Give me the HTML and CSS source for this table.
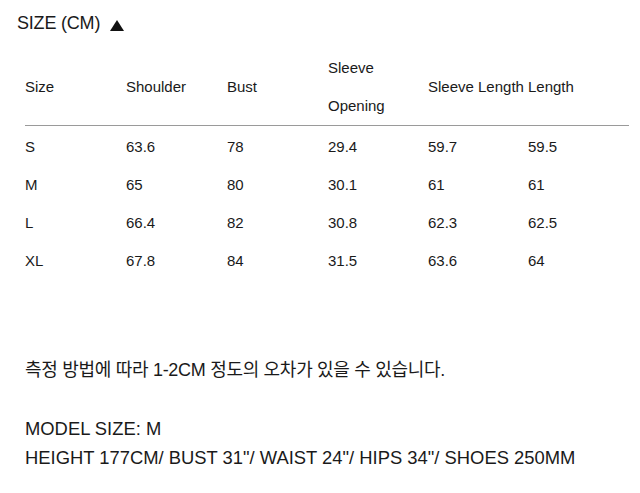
FILE: index.html
```html
<!DOCTYPE html>
<html lang="ko">
<head>
<meta charset="utf-8">
<link rel="stylesheet" href="styles.css">
</head>
<body>
<h2 class="title">SIZE (CM)<span class="arrow" aria-label="▲"></span></h2>
<table class="size-table">
  <colgroup>
    <col class="c1"><col class="c2"><col class="c3"><col class="c4"><col class="c5"><col class="c6">
  </colgroup>
  <thead>
    <tr><th>Size</th><th>Shoulder</th><th>Bust</th><th>Sleeve<br>Opening</th><th>Sleeve Length</th><th>Length</th></tr>
  </thead>
  <tbody>
    <tr class="first"><td>S</td><td>63.6</td><td>78</td><td>29.4</td><td>59.7</td><td>59.5</td></tr>
    <tr><td>M</td><td>65</td><td>80</td><td>30.1</td><td>61</td><td>61</td></tr>
    <tr><td>L</td><td>66.4</td><td>82</td><td>30.8</td><td>62.3</td><td>62.5</td></tr>
    <tr><td>XL</td><td>67.8</td><td>84</td><td>31.5</td><td>63.6</td><td>64</td></tr>
  </tbody>
</table>
<div class="notes">
  <p class="note">측정 방법에 따라 1-2CM 정도의 오차가 있을 수 있습니다.</p>
  <p class="model">MODEL SIZE: M<br>HEIGHT 177CM/ BUST 31"/ WAIST 24"/ HIPS 34"/ SHOES 250MM</p>
</div>
</body>
</html>
```
FILE: styles.css
```css
html, body {
  margin: 0;
  padding: 0;
  background: #ffffff;
}
body {
  width: 640px;
  height: 493px;
  overflow: hidden;
  color: #1a1a1a;
  font-family: "Liberation Sans", Arial, "Noto Sans CJK KR", sans-serif;
}
.title {
  margin: 0;
  padding: 13px 0 0 17px;
  font-size: 18px;
  line-height: 20px;
  font-weight: normal;
  letter-spacing: -0.2px;
  display: flex;
  align-items: center;
}
.arrow {
  display: inline-block;
  width: 0;
  height: 0;
  margin-left: 10px;
  margin-top: 4px;
  border-left: 7px solid transparent;
  border-right: 7px solid transparent;
  border-bottom: 11px solid #111;
}
.size-table {
  margin: 16px 0 0 25px;
  width: 604px;
  border-collapse: collapse;
  table-layout: fixed;
  font-size: 15px;
}
.c1, .c2, .c3 { width: 101px; }
.c4, .c5 { width: 100px; }
.c6 { width: 101px; }
.size-table th {
  font-weight: normal;
  text-align: left;
  vertical-align: middle;
  line-height: 38px;
  padding: 0;
  border-bottom: 1px solid #9a9a9a;
  white-space: nowrap;
}
.size-table td {
  padding: 0;
  line-height: 38px;
  height: 38px;
}
.size-table tr.first td {
  padding-top: 2px;
}
.notes {
  padding-left: 25px;
}
.note {
  margin: 76px 0 0;
  font-size: 18px;
  letter-spacing: -0.3px;
  line-height: 29px;
}
.model {
  margin: 29px 0 0;
  font-size: 18.4px;
  line-height: 29px;
}
```
